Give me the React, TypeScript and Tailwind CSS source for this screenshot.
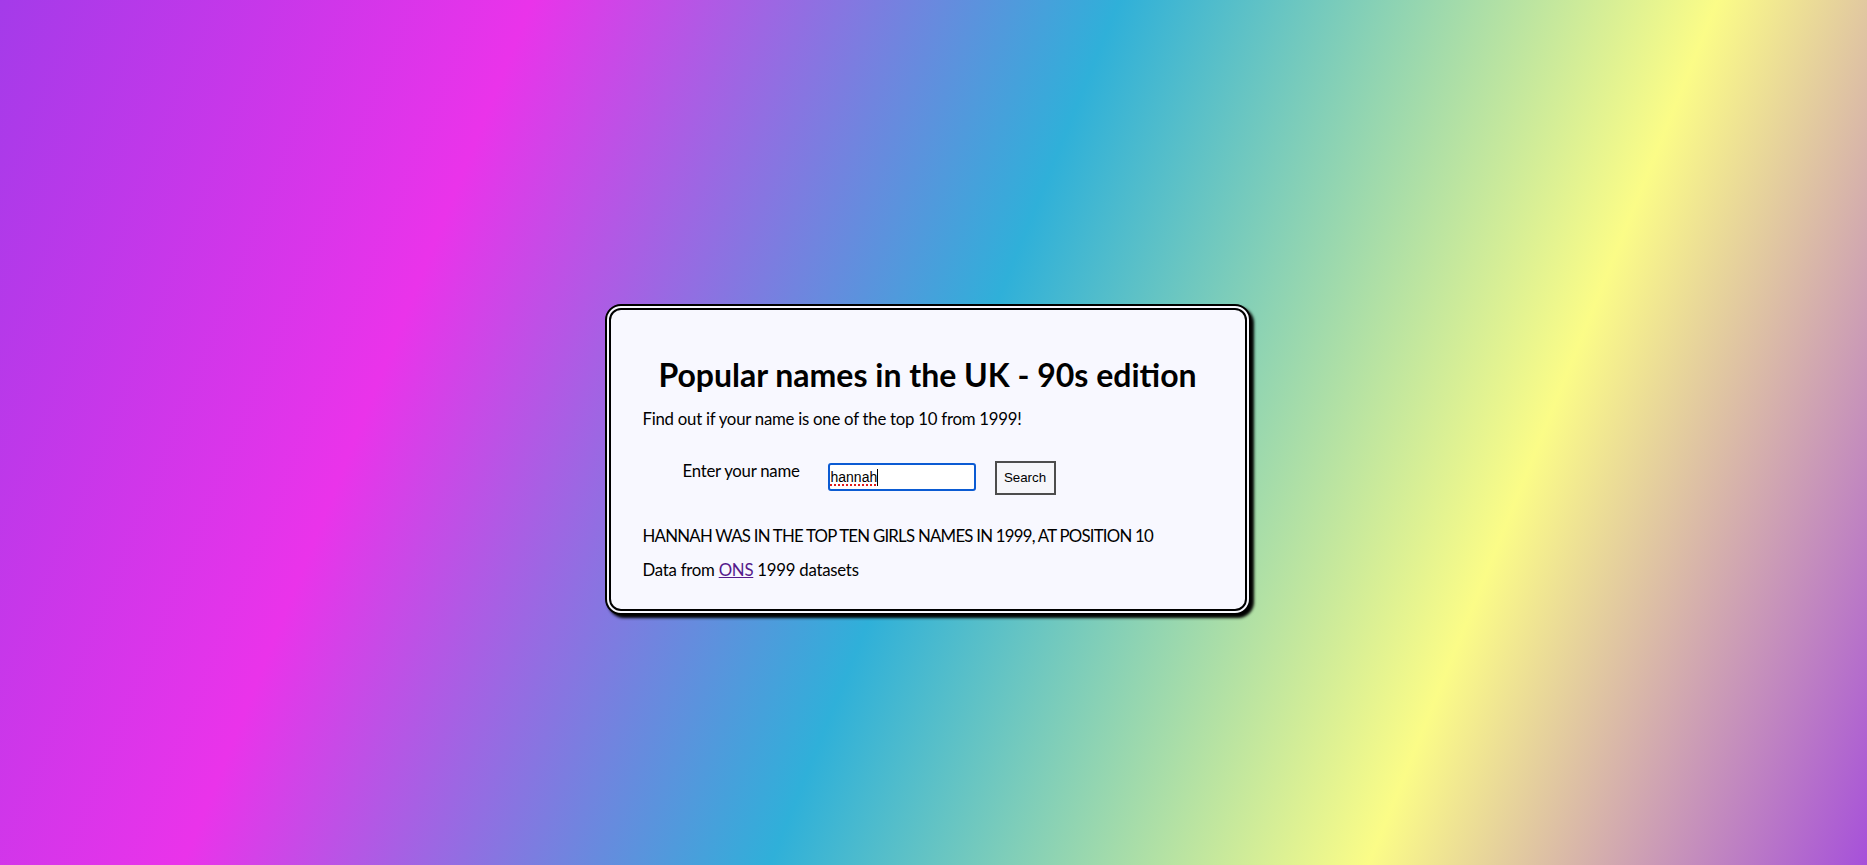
import React from "react";

export default function App() {
  return (
    <div className="min-h-screen w-full bg-[linear-gradient(112deg,#a43be9_0%,#ea33ea_24%,#2fb0d9_50.5%,#fbfc87_77.5%,#a650da_100%)] flex justify-center items-start pt-[304px] pr-[12px] pb-[250px] font-['Lato','Noto_Sans',sans-serif] text-black">
      <div className="w-[646px] rounded-[16px] border-[6px] border-double border-black bg-[#f8f8ff] shadow-[3px_3px_3px_#000] pt-[45px] pb-[27px] px-[32px]">
        <h1 className="text-center text-[32px] leading-[40px] font-bold">
          Popular names in the UK - 90s edition
        </h1>
        <p className="mt-[12px] text-[16.8px] leading-[24px] tracking-[-0.25px]">
          Find out if your name is one of the top 10 from 1999!
        </p>
        <div className="mt-[28px] flex items-start h-[35px]">
          <label className="ml-[40px] w-[145px] text-[16.8px] leading-[24px] tracking-[-0.25px]">Enter your name</label>
          <div className="mt-[4px] w-[148px] h-[28px] rounded-[3px] border-2 border-[#0b5bd3] bg-white flex items-center pl-[1px] font-['Liberation_Sans',Arial,sans-serif] text-[14px]">
            <span className="underline decoration-dotted decoration-[#e21b1b] decoration-[1.5px] underline-offset-[3px]">hannah</span>
            <span className="w-[1px] h-[17px] bg-black"></span>
          </div>
          <button className="ml-[19px] mt-[2px] w-[61px] h-[34px] border-2 border-[#4d4d4d] bg-[#f6f6fa] font-['Liberation_Sans',Arial,sans-serif] text-[13.33px] text-black">
            Search
          </button>
        </div>
        <p className="mt-[30px] text-[16.8px] leading-[24px] tracking-[-0.75px]">
          HANNAH WAS IN THE TOP TEN GIRLS NAMES IN 1999, AT POSITION 10
        </p>
        <p className="mt-[10px] text-[16.8px] leading-[24px] tracking-[-0.25px]">
          Data from <a href="#" className="text-[#551a8b] underline">ONS</a> 1999 datasets
        </p>
      </div>
    </div>
  );
}
